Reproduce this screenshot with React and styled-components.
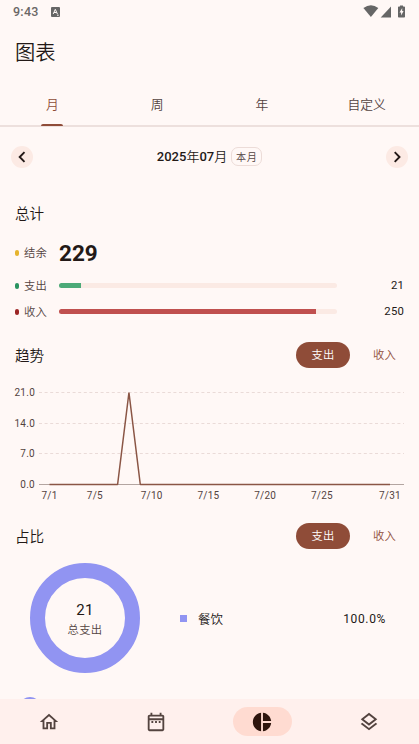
import React, { useState } from "react";
import styled, { createGlobalStyle } from "styled-components";

const GlobalStyle = createGlobalStyle`
  * { box-sizing: border-box; }
  body {
    margin: 0;
    background: #fff8f6;
    color: #231917;
    font-family: Roboto, "Noto Sans CJK SC", sans-serif;
  }
  button {
    border: 0;
    padding: 0;
    background: none;
    color: inherit;
    font: inherit;
  }
`
const Screen = styled.div`
  width: 419px;
  height: 744px;
  display: flex;
  flex-direction: column;
  overflow: hidden;
`
const StatusBar = styled.div`
  height: 24px;
  flex: none;
  display: flex;
  align-items: center;
  padding: 0 13px;
  color: #6b6766;
`
const Clock = styled.span`
  width: 38px;
  font-size: 12.5px;
  font-weight: 500;
  line-height: 14px;
  letter-spacing: 0.25px;
`
const StatusIcons = styled.div`
  display: flex;
  margin-left: auto;
`
const Title = styled.h1`
  height: 58px;
  flex: none;
  margin: 0;
  padding: 0 15px;
  font-size: 20.3px;
  font-weight: 350;
  line-height: 59px;
`
const Tabs = styled.div`
  height: 45px;
  flex: none;
  display: grid;
  grid-template-columns: repeat(4, 1fr);
  border-bottom: 2px solid #ede0dd;
`
const Tab = styled.button`
  display: flex;
  flex-direction: column;
  align-items: center;
  height: 44px;
  font-size: 12.8px;
  font-weight: 350;
  line-height: 45px;
  color: ${(props) => (props.$active ? "#8f4c38" : "#53433f")};
  &::after {
    content: "";
    width: 22px;
    height: 2px;
    flex: none;
    margin-top: -3px;
    border-radius: 2px 2px 0 0;
    background: ${(props) => (props.$active ? "#8f4c38" : "transparent")};
  }
`
const MonthRow = styled.div`
  height: 59px;
  flex: none;
  display: flex;
  justify-content: space-between;
  align-items: center;
  padding: 0 11px;
`
const RoundButton = styled.button`
  width: 22px;
  height: 22px;
  display: flex;
  align-items: center;
  justify-content: center;
  border-radius: 50%;
  background: #fceae4;
`
const Month = styled.div`
  display: flex;
  align-items: center;
  gap: 4px;
  font-size: 13px;
  font-weight: 500;
  line-height: 20px;
`
const MonthUnit = styled.span`
  font-weight: 350;
`
const Badge = styled.span`
  width: 31px;
  height: 19px;
  border: 1px solid #ecdcd8;
  border-radius: 7px;
  color: #53433f;
  font-size: 10.2px;
  font-weight: 350;
  line-height: 19px;
  letter-spacing: 0.4px;
  text-align: center;
`
const SectionHeader = styled.div`
  height: 26px;
  flex: none;
  display: flex;
  justify-content: space-between;
  align-items: center;
  margin-top: ${(props) => props.$top}px;
  padding: 0 15px;
`
const SectionTitle = styled.h2`
  margin: 0;
  padding-top: 1px;
  font-size: 14.6px;
  font-weight: 350;
  line-height: 22px;
`
const Summary = styled.div`
  flex: none;
  padding: 14px 15px 0;
`
const SummaryRow = styled.div`
  height: 26px;
  display: grid;
  grid-template-columns: 9px 35px 278px 1fr;
  align-items: center;
  margin-bottom: ${(props) => props.$gap || 0}px;
`
const Dot = styled.span`
  width: 4px;
  height: 6px;
  border-radius: 2px;
  background: ${(props) => props.$color};
`
const Label = styled.span`
  padding-top: 2px;
  color: #53433f;
  font-size: 11.3px;
  font-weight: 350;
  line-height: 16px;
  letter-spacing: 0.3px;
`
const Balance = styled.strong`
  font-size: 22.5px;
  font-weight: 700;
  line-height: 26px;
`
const Track = styled.div`
  height: 5px;
  margin-bottom: 1px;
  border-radius: 3px;
  background: #fbeae4;
  overflow: hidden;
`
const Fill = styled.div`
  height: 100%;
  background: ${(props) => props.$color};
`
const Amount = styled.span`
  font-size: 11.3px;
  line-height: 16px;
  letter-spacing: 0.2px;
  text-align: right;
`
const Toggle = styled.div`
  display: flex;
  margin-right: -15px;
`
const ToggleButton = styled.button`
  width: ${(props) => (props.$active ? 54 : 69)}px;
  height: 26px;
  border-radius: 13px;
  background: ${(props) => (props.$active ? "#8f4c38" : "transparent")};
  color: ${(props) => (props.$active ? "#fff" : "#8f4c38")};
  font-size: 11.3px;
  font-weight: 350;
  line-height: 28px;
  letter-spacing: 0.3px;
  text-align: center;
`
const TrendChart = styled.svg`
  display: block;
  flex: none;
  width: 419px;
  height: 130px;
  margin-top: 12px;
  font-size: 10px;
  letter-spacing: 0.25px;
`
const Share = styled.div`
  height: 110px;
  flex: none;
  display: flex;
  align-items: center;
  margin-top: 14px;
  padding: 0 33px 0 30px;
`
const Donut = styled.div`
  width: 110px;
  height: 110px;
  display: flex;
  flex-direction: column;
  align-items: center;
  justify-content: center;
  padding-top: 3px;
  border: 15px solid #9194f2;
  border-radius: 50%;
`
const DonutValue = styled.span`
  font-size: 15px;
  line-height: 20px;
  letter-spacing: 0.2px;
`
const DonutLabel = styled.span`
  margin-top: 2px;
  color: #53433f;
  font-size: 11.3px;
  font-weight: 350;
  line-height: 18px;
  letter-spacing: 0.3px;
`
const Legend = styled.div`
  flex: 1;
  display: flex;
  align-items: center;
  margin-left: 40px;
  font-size: 12.5px;
  line-height: 18px;
`
const Swatch = styled.span`
  width: 7px;
  height: 7px;
  margin-right: 11px;
  background: #9194f2;
`
const Category = styled.span`
  padding-top: 3px;
  font-weight: 350;
`
const Percent = styled.span`
  margin-left: auto;
  padding-top: 1px;
  font-size: 12px;
  letter-spacing: 0.65px;
`
const CategoryList = styled.div`
  flex: 1;
  min-height: 0;
  padding: 24px 19px 0;
  overflow: hidden;
`
const CategoryIcon = styled.div`
  width: 22px;
  height: 22px;
  border-radius: 50%;
  background: #9194f2;
`
const BottomNav = styled.nav`
  height: 45px;
  flex: none;
  display: flex;
  justify-content: space-between;
  padding: 8px 20px 0 20px;
  background: #fff0ed;
`
const NavItem = styled.button`
  width: 59px;
  height: 29px;
  display: flex;
  align-items: center;
  justify-content: center;
  border-radius: 15px;
  background: ${(props) => (props.$active ? "#ffdbd1" : "transparent")};
  color: ${(props) => (props.$active ? "#2e150d" : "#53433f")};
  svg {
    margin-right: 1px;
  }
`

const tabs = ["月", "周", "年", "自定义"]

const gridLines = [
  { y: 12.5, text: "21.0" },
  { y: 43.5, text: "14.0" },
  { y: 73.5, text: "7.0" },
  { y: 104.5, text: "0.0" },
]
const days = [1, 5, 10, 15, 20, 25, 31]
const dayX = (day) => 49.5 + (day - 1) * 11.35

const navIcons = [
  "M12 5.69l5 4.5V18h-2v-6H9v6H7v-7.81l5-4.5M12 3L2 12h3v8h6v-6h2v6h6v-8h3L12 3z",
  "M7 11h2v2H7v-2zm14-5v14c0 1.1-.9 2-2 2H5c-1.11 0-2-.9-2-2l.01-14c0-1.1.88-2 1.99-2h1V2h2v2h8V2h2v2h1c1.1 0 2 .9 2 2zM5 8h14V6H5v2zm14 12V10H5v10h14zm-4-7h2v-2h-2v2zm-4 0h2v-2h-2v2z",
  "M11 2v20c-5.07-.5-9-4.79-9-10s3.93-9.5 9-10zm2.03 0v8.99H22c-.47-4.74-4.24-8.52-8.97-8.99zm0 11.01V22c4.74-.47 8.5-4.25 8.97-8.99h-8.97z",
  "M11.99 18.54l-7.37-5.73L3 14.07l9 7 9-7-1.63-1.27-7.38 5.74zM12 16l7.36-5.73L21 9l-9-7-9 7 1.63 1.27L12 16zm0-11.47L17.74 9 12 13.47 6.26 9 12 4.53z",
]

function Chevron({ d }) {
  return (
    <svg width="22" height="22" viewBox="0 0 22 22" fill="none" stroke="#231917" strokeWidth="1.9">
      <path d={d} />
    </svg>
  )
}

function TypeToggle() {
  const [type, setType] = useState("支出")
  return (
    <Toggle>
      {["支出", "收入"].map((item) => (
        <ToggleButton key={item} $active={item === type} onClick={() => setType(item)}>
          {item}
        </ToggleButton>
      ))}
    </Toggle>
  )
}

function Trend() {
  return (
    <TrendChart viewBox="0 0 419 130">
      {gridLines.map((line) => (
        <g key={line.text}>
          <line
            x1="39"
            x2="404"
            y1={line.y}
            y2={line.y}
            stroke={line.text === "0.0" ? "#b3a5a1" : "#eadbd8"}
            strokeDasharray={line.text === "0.0" ? "none" : "3 2.6"}
          />
          <text x="35" y={line.y + 3.7} textAnchor="end" fill="#53433f">{line.text}</text>
        </g>
      ))}
      <polyline
        points={`${dayX(1)},104.5 ${dayX(7)},104.5 ${dayX(8)},12.5 ${dayX(9)},104.5 ${dayX(31)},104.5`}
        fill="none"
        stroke="#8a5545"
        strokeWidth="1.5"
        strokeLinejoin="bevel"
      />
      {days.map((day) => (
        <text key={day} x={dayX(day)} y="118.5" textAnchor="middle" fill="#53433f">7/{day}</text>
      ))}
    </TrendChart>
  )
}

function App() {
  const [tab, setTab] = useState("月")
  const [page, setPage] = useState(2)

  return (
    <Screen>
      <GlobalStyle />
      <StatusBar>
        <Clock>9:43</Clock>
        <svg width="9" height="10" viewBox="0 0 9 10">
          <rect width="9" height="10" rx="1" fill="#666" />
          <path d="M2.2 7L4.3 2.3L6.4 7M3 5.5H5.6M6 8.2H7.7" fill="none" stroke="#fff8f6" strokeWidth="1" />
        </svg>
        <StatusIcons>
          <svg width="43" height="14" viewBox="363 4.5 43 14" fill="#666">
            <path d="M363.4 7.5Q371 2.2 378.3 7.5L370.9 16.5Z" />
            <path d="M391 6V17H380.7Z" />
            <path d="M400 5h3v1h1.2q.8 0 .8.8v9.4q0 .8-.8.8h-5.4q-.8 0-.8-.8V6.8q0-.8.8-.8h1.2z" />
            <path d="M402.2 7.5l-2.7 4.5h1.6v3l2.5-4.5h-1.4z" fill="#fff8f6" />
          </svg>
        </StatusIcons>
      </StatusBar>
      <Title>图表</Title>
      <Tabs>
        {tabs.map((item) => (
          <Tab key={item} $active={item === tab} onClick={() => setTab(item)}>{item}</Tab>
        ))}
      </Tabs>
      <MonthRow>
        <RoundButton><Chevron d="M13.5 6.2L8.7 11L13.5 15.8" /></RoundButton>
        <Month>
          <span>2025<MonthUnit>年</MonthUnit>07<MonthUnit>月</MonthUnit></span>
          <Badge>本月</Badge>
        </Month>
        <RoundButton><Chevron d="M8.7 6.2L13.5 11L8.7 15.8" /></RoundButton>
      </MonthRow>

      <SectionHeader $top={14}>
        <SectionTitle>总计</SectionTitle>
      </SectionHeader>
      <Summary>
        <SummaryRow $gap={7}>
          <Dot $color="#e6b42e" />
          <Label>结余</Label>
          <Balance>229</Balance>
        </SummaryRow>
        <SummaryRow>
          <Dot $color="#2a9360" />
          <Label>支出</Label>
          <Track><Fill $color="#4caa78" style={{ width: "7.9%" }} /></Track>
          <Amount>21</Amount>
        </SummaryRow>
        <SummaryRow>
          <Dot $color="#9c2525" />
          <Label>收入</Label>
          <Track><Fill $color="#c0504f" style={{ width: "92.3%" }} /></Track>
          <Amount>250</Amount>
        </SummaryRow>
      </Summary>

      <SectionHeader $top={17}>
        <SectionTitle>趋势</SectionTitle>
        <TypeToggle />
      </SectionHeader>
      <Trend />

      <SectionHeader $top={13}>
        <SectionTitle>占比</SectionTitle>
        <TypeToggle />
      </SectionHeader>
      <Share>
        <Donut>
          <DonutValue>21</DonutValue>
          <DonutLabel>总支出</DonutLabel>
        </Donut>
        <Legend>
          <Swatch />
          <Category>餐饮</Category>
          <Percent>100.0%</Percent>
        </Legend>
      </Share>
      <CategoryList>
        <CategoryIcon />
      </CategoryList>

      <BottomNav>
        {navIcons.map((d, index) => (
          <NavItem key={index} $active={index === page} onClick={() => setPage(index)}>
            <svg width="22" height="22" viewBox="0 0 24 24" fill="currentColor"><path d={d} /></svg>
          </NavItem>
        ))}
      </BottomNav>
    </Screen>
  )
}

export default App;
